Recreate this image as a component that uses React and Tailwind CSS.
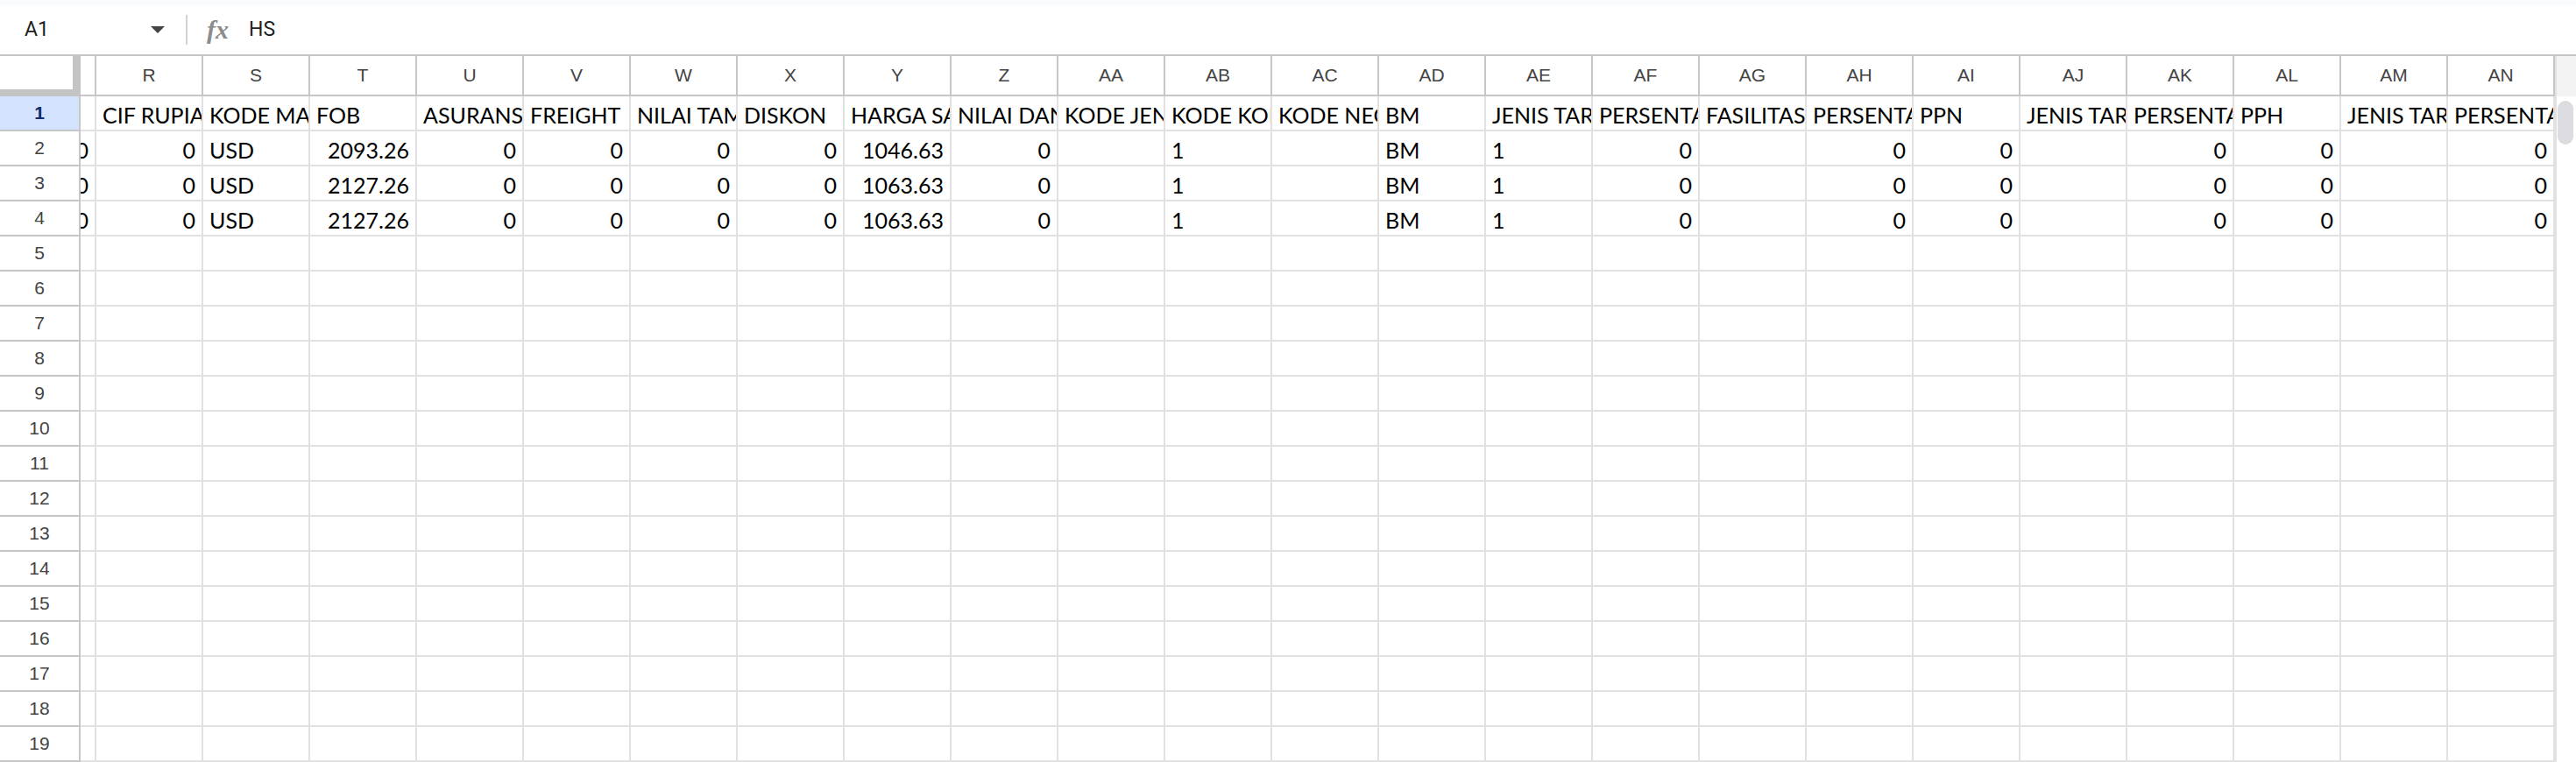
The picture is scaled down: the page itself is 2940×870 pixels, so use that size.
import React from "react";

const letters = ["R","S","T","U","V","W","X","Y","Z","AA","AB","AC","AD","AE","AF","AG","AH","AI","AJ","AK","AL","AM","AN"];

// header texts as they show in the narrow columns
const titles = [
  "CIF RUPIA","KODE MA","FOB","ASURANS","FREIGHT","NILAI TAM","DISKON","HARGA SA",
  "NILAI DAN","KODE JEN","KODE KON","KODE NEG","BM","JENIS TAR","PERSENTA","FASILITAS",
  "PERSENTA","PPN","JENIS TAR","PERSENTA","PPH","JENIS TAR","PERSENTA",
];

// r = right aligned (numbers), l = left aligned (text)
const align = ["r","l","r","r","r","r","r","r","r","l","l","l","l","l","r","l","r","r","l","r","r","l","r"];

const makeRow = (fob, harga) => [
  "0","USD",fob,"0","0","0","0",harga,"0","","1","","BM","1","0","","0","0","","0","0","","0",
];

const data = [
  makeRow("2093.26", "1046.63"),
  makeRow("2127.26", "1063.63"),
  makeRow("2127.26", "1063.63"),
];

function Cell({ value, right }) {
  return (
    <div
      className={`w-[122px] h-full shrink-0 border-r-2 border-b-2 border-[#e1e1e1] overflow-hidden whitespace-nowrap flex items-end px-[7px] pb-[4px] ${
        right ? "justify-end" : "justify-start"
      }`}
    >
      <span className="leading-none">{value}</span>
    </div>
  );
}

function RowHeader({ n }) {
  const active = n === 1;
  return (
    <div
      className={`w-[92px] h-full shrink-0 border-r-2 border-b-2 border-[#c7c7c7] flex items-center justify-center font-['Liberation_Sans',Arial,sans-serif] text-[21px] ${
        active ? "bg-[#d3e3fd] text-[#0f2c6b] font-bold" : "bg-white text-[#444]"
      }`}
    >
      {n}
    </div>
  );
}

function FormulaBar() {
  return (
    <div className="h-[56px] flex items-center bg-white font-['Roboto',Arial,sans-serif] text-[23px] text-[#1f1f1f]">
      <div className="w-[212px] flex items-center pl-[28px] pr-[24px]">
        <span>A1</span>
        <div className="flex-1" />
        <svg width="16" height="8" viewBox="0 0 16 8">
          <path d="M0 0 L16 0 L8 8 Z" fill="#444" />
        </svg>
      </div>
      <div className="w-[2px] h-[34px] bg-[#d0d2d4]" />
      <span className="ml-[22px] w-[28px] font-['Liberation_Serif',serif] italic font-bold text-[30px] text-[#8c8c8c] leading-none">
        fx
      </span>
      <span className="ml-[20px]">HS</span>
    </div>
  );
}

export default function App() {
  const rows = Array.from({ length: 19 }, (_, i) => i + 1);

  return (
    <div className="w-[2940px] h-[870px] overflow-hidden bg-white flex flex-col">
      <div className="h-[6px] bg-[#f9fbfd]" />
      <FormulaBar />

      <div className="flex-1 flex border-t-2 border-[#c7c7c7] min-h-0">
        {/* grid */}
        <div className="w-[2916px] shrink-0 flex flex-col">
          {/* column letters */}
          <div className="h-[46px] flex font-['Liberation_Sans',Arial,sans-serif] text-[21px] text-[#444]">
            <div className="w-[92px] h-full shrink-0 flex flex-col">
              <div className="flex-1 flex">
                <div className="flex-1 bg-white" />
                <div className="w-[9px] bg-[#c4c4c4]" />
              </div>
              <div className="h-[8px] bg-[#c4c4c4]" />
            </div>
            <div className="w-[18px] h-full shrink-0 border-r-2 border-b-2 border-[#c7c7c7]" />
            {letters.map((l) => (
              <div
                key={l}
                className="w-[122px] h-full shrink-0 border-r-2 border-b-2 border-[#c7c7c7] flex items-center justify-center"
              >
                {l}
              </div>
            ))}
          </div>

          {/* rows */}
          {rows.map((n) => {
            const values = n === 1 ? titles : data[n - 2] || [];
            return (
              <div key={n} className="h-[40px] shrink-0 flex font-['Lato',sans-serif] text-[25px] text-black">
                <RowHeader n={n} />
                <div className="w-[18px] h-full shrink-0 border-r-2 border-b-2 border-[#e1e1e1] overflow-hidden whitespace-nowrap flex items-end justify-end pr-[7px] pb-[4px]">
                  {n >= 2 && n <= 4 && <span className="leading-none">0</span>}
                </div>
                {letters.map((l, i) => (
                  <Cell key={l} value={values[i] || ""} right={n !== 1 && align[i] === "r"} />
                ))}
              </div>
            );
          })}
        </div>

        {/* vertical scrollbar */}
        <div className="flex-1 flex flex-col border-l-2 border-[#e1e1e1]">
          <div className="h-[46px] bg-[#f3f3f3]" />
          <div className="ml-[1px] mt-[5px] w-[18px] h-[50px] rounded-full bg-[#dadce0]" />
        </div>
      </div>
    </div>
  );
}
